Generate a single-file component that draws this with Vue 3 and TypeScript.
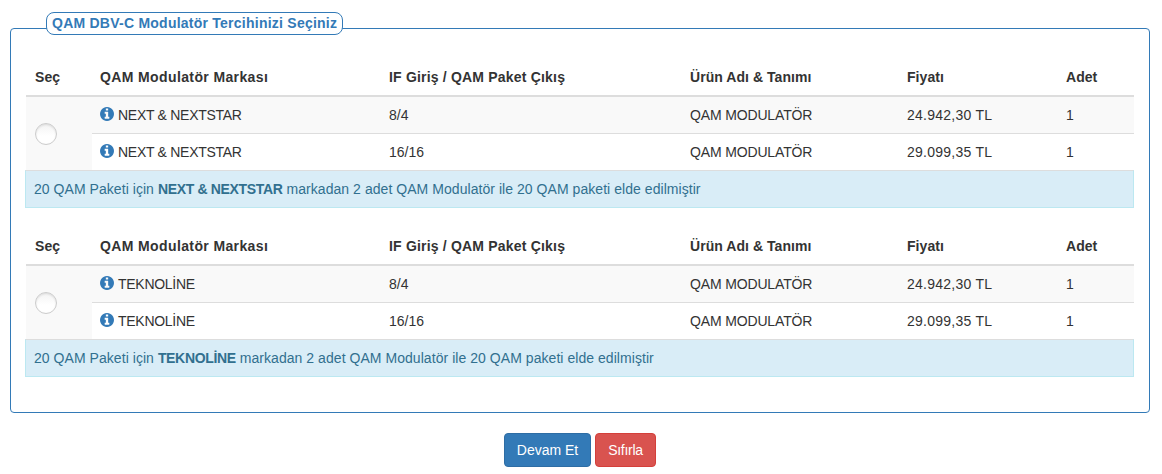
<script setup lang="ts">
interface Row { spec: string; price: string }
interface Group { brand: string }
const groups: Group[] = [{ brand: 'NEXT & NEXTSTAR' }, { brand: 'TEKNOLİNE' }]
const rows: Row[] = [
  { spec: '8/4', price: '24.942,30 TL' },
  { spec: '16/16', price: '29.099,35 TL' },
]
</script>

<template>
  <div class="page">
    <section class="box">
      <h2 class="box-title">QAM DBV-C Modulatör Tercihinizi Seçiniz</h2>
      <div v-for="g in groups" :key="g.brand" class="group">
        <table class="grid">
          <colgroup>
            <col class="c1" /><col class="c2" /><col class="c3" /><col class="c4" /><col class="c5" /><col class="c6" />
          </colgroup>
          <thead>
            <tr>
              <th class="h-pick">Seç</th>
              <th class="h-brand">QAM Modulatör Markası</th>
              <th class="h-spec">IF Giriş / QAM Paket Çıkış</th>
              <th>Ürün Adı &amp; Tanımı</th>
              <th>Fiyatı</th>
              <th>Adet</th>
            </tr>
          </thead>
          <tbody>
            <tr v-for="(r, i) in rows" :key="r.spec" :class="{ odd: i === 0 }">
              <td v-if="i === 0" rowspan="2" class="pick"><span class="radio"></span></td>
              <td>
                <svg class="info" viewBox="0 128 1536 1536" aria-hidden="true">
                  <path fill="#337ab7" d="M1024 1376v-160q0-14-9-23t-23-9h-96v-512q0-14-9-23t-23-9h-320q-14 0-23 9t-9 23v160q0 14 9 23t23 9h96v320h-96q-14 0-23 9t-9 23v160q0 14 9 23t23 9h448q14 0 23-9t9-23zm-128-896v-160q0-14-9-23t-23-9h-192q-14 0-23 9t-9 23v160q0 14 9 23t23 9h192q14 0 23-9t9-23zm640 416q0 209-103 385.5t-279.5 279.5-385.5 103-385.5-103-279.5-279.5-103-385.5 103-385.5 279.5-279.5 385.5-103 385.5 103 279.5 279.5 103 385.5z" />
                </svg>
                <span class="brand">{{ g.brand }}</span>
              </td>
              <td>{{ r.spec }}</td>
              <td class="product">QAM MODULATÖR</td>
              <td class="price">{{ r.price }}</td>
              <td>1</td>
            </tr>
          </tbody>
        </table>
        <div class="note">20 QAM Paketi için <strong>{{ g.brand }}</strong> markadan 2 adet QAM Modulatör ile 20 QAM paketi elde edilmiştir</div>
      </div>
    </section>
    <div class="actions">
      <button type="button" class="btn primary">Devam Et</button>
      <button type="button" class="btn danger">Sıfırla</button>
    </div>
  </div>
</template>

<style scoped>
.page {
  padding: 28px 12px 0 10px;
  font-family: "Liberation Sans", Arial, sans-serif;
  font-size: 14px;
  line-height: 20px;
  color: #333;
}
.box {
  position: relative;
  padding: 30px 15px 15px 14px;
  border: 1px solid #337ab7;
  border-radius: 4px;
}
.box-title {
  position: absolute;
  top: -17px;
  left: 35px;
  margin: 0;
  padding: 0 5px;
  height: 23px;
  box-sizing: border-box;
  border: 1px solid #337ab7;
  border-radius: 8px;
  background: #fff;
  color: #337ab7;
  font-size: 14px;
  font-weight: 700;
  line-height: 21px;
  letter-spacing: 0.24px;
}
.group {
  margin-bottom: 20px;
}
.grid {
  width: calc(100% - 1px);
  margin-left: 1px;
  table-layout: fixed;
  border-collapse: collapse;
  border-spacing: 0;
}
.c1 { width: 66px; }
.c2 { width: 289px; }
.c3 { width: 301px; }
.c4 { width: 217px; }
.c5 { width: 159px; }
.c6 { width: 76px; }
th {
  padding: 8px;
  text-align: left;
  font-weight: 700;
  border-bottom: 2px solid #ddd;
  letter-spacing: 0.05px;
}
.h-pick { padding-left: 9px; }
.h-brand { letter-spacing: 0.38px; }
.h-spec { letter-spacing: 0.19px; }
td {
  padding: 8px;
  border-top: 1px solid #ddd;
}
thead + tbody tr:first-child td {
  border-top: 0;
}
.odd td,
.pick {
  background: #f9f9f9;
}
.pick {
  vertical-align: middle;
  padding: 0 0 0 9px;
}
.radio {
  display: block;
  box-sizing: border-box;
  width: 22px;
  height: 22px;
  border: 1px solid #ccc;
  border-radius: 50%;
  background: linear-gradient(#f3f3f3, #fff 60%);
  box-shadow: inset 0 1px 2px rgba(0, 0, 0, 0.1);
}
.info {
  display: inline-block;
  width: 14px;
  height: 14px;
  margin-right: 4px;
  vertical-align: -1px;
}
.brand { letter-spacing: -0.28px; }
.product { letter-spacing: -0.15px; }
.price { letter-spacing: 0.25px; }
.note {
  box-sizing: border-box;
  height: 38px;
  padding: 8px;
  border: 1px solid #bce8f1;
  border-top-color: #ddd;
  background: #d9edf7;
  color: #31708f;
  letter-spacing: 0.05px;
}
.note strong {
  font-weight: 700;
  letter-spacing: -0.33px;
}
.actions {
  display: flex;
  justify-content: center;
  gap: 4px;
  margin-top: 20px;
}
.btn {
  box-sizing: border-box;
  height: 34px;
  padding: 6px 0;
  border: 1px solid transparent;
  border-radius: 4px;
  color: #fff;
  font: 14px/20px "Liberation Sans", Arial, sans-serif;
  white-space: nowrap;
}
.primary {
  width: 87px;
  background: #337ab7;
  border-color: #2e6da4;
}
.danger {
  width: 61px;
  background: #d9534f;
  border-color: #d43f3a;
  letter-spacing: -0.27px;
}
</style>
<style>
body { background: #fff; }
</style>
